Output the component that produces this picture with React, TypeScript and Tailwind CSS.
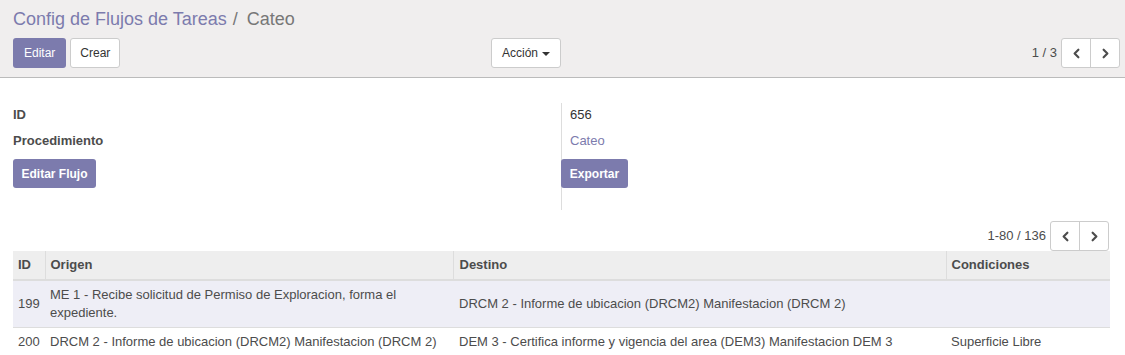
import { ChevronLeft, ChevronRight } from "lucide-react";

const FONT = { fontFamily: '"Liberation Sans", Arial, sans-serif' };

type Row = { id: number; origen: string; destino: string; cond: string };

const ROWS: Row[] = [
  {
    id: 199,
    origen: "ME 1 - Recibe solicitud de Permiso de Exploracion, forma el expediente.",
    destino: "DRCM 2 - Informe de ubicacion (DRCM2) Manifestacion (DRCM 2)",
    cond: "",
  },
  {
    id: 200,
    origen: "DRCM 2 - Informe de ubicacion (DRCM2) Manifestacion (DRCM 2)",
    destino: "DEM 3 - Certifica informe y vigencia del area (DEM3) Manifestacion DEM 3",
    cond: "Superficie Libre",
  },
];

// pager: texto + dos flechas
function Pager({ label }: { label: string }) {
  return (
    <div className="flex items-center gap-[4px]">
      <span className="text-[13px] text-[#4c4c4c]">{label}</span>
      <div className="flex h-[30px] rounded-[3px] border border-[#ccc] bg-white">
        <button className="flex w-[29px] items-center justify-center border-r border-[#ccc] text-[#4c4c4c]">
          <ChevronLeft size={15} strokeWidth={3.5} />
        </button>
        <button className="flex w-[28px] items-center justify-center text-[#4c4c4c]">
          <ChevronRight size={15} strokeWidth={3.5} />
        </button>
      </div>
    </div>
  );
}

export default function App() {
  return (
    <div className="min-h-[355px] w-[1125px] bg-white text-[13px] text-[#4c4c4c]" style={FONT}>
      {/* panel de control */}
      <div className="border-b border-[#bbb] bg-[#f0eeee] px-[13px] pt-[8px] pb-[9px]">
        <div className="flex h-[22px] items-center text-[18px] leading-none">
          <span className="text-[#7c7bad]">Config de Flujos de Tareas</span>
          <span className="ml-[6px] text-[#777]">/</span>
          <span className="ml-[9px] text-[#777]">Cateo</span>
        </div>
        <div className="mt-[8px] flex h-[30px] items-center">
          <div className="flex w-[478px] gap-[4px]">
            <button className="h-[30px] rounded-[3px] bg-[#7c7bad] px-[11px] text-[12px] text-white">Editar</button>
            <button className="h-[30px] rounded-[3px] border border-[#ccc] bg-white px-[9px] text-[12px] text-[#333]">
              Crear
            </button>
          </div>
          <button className="flex h-[30px] items-center gap-[4px] rounded-[3px] border border-[#ccc] bg-white px-[10px] text-[12px] text-[#333]">
            Acción
            <span className="mt-[1px] h-0 w-0 border-x-[4px] border-t-[4px] border-x-transparent border-t-[#333]" />
          </button>
          <div className="ml-auto mr-[-8px]">
            <Pager label="1 / 3" />
          </div>
        </div>
      </div>

      {/* formulario */}
      <div className="grid grid-cols-[548px_1fr] px-[13px] pt-[25px]">
        <div className="flex flex-col pt-[2px]">
          <div className="h-[26px] font-bold leading-[20px]">ID</div>
          <div className="h-[28px] font-bold leading-[20px]">Procedimiento</div>
          <button className="h-[29px] w-[83px] rounded-[3px] bg-[#7c7bad] text-[12px] font-bold text-white">
            Editar Flujo
          </button>
        </div>
        <div className="flex h-[107px] flex-col border-l border-[#ddd] pt-[2px]">
          <div className="h-[26px] pl-[8px] leading-[20px] text-[#333]">656</div>
          <div className="h-[28px] pl-[8px] leading-[20px] text-[#7c7bad]">Cateo</div>
          <button className="-ml-px h-[29px] w-[67px] rounded-[3px] bg-[#7c7bad] text-[12px] font-bold text-white">
            Exportar
          </button>
        </div>
      </div>

      {/* lista */}
      <div className="px-[13px] pt-[11px]">
        <div className="flex justify-end pr-[3px]">
          <Pager label="1-80 / 136" />
        </div>
        <table className="w-[1097px] table-fixed border-collapse text-left">
          <colgroup>
            <col className="w-[32px]" />
            <col className="w-[408px]" />
            <col className="w-[493px]" />
            <col className="w-[164px]" />
          </colgroup>
          <thead>
            <tr className="h-[29px] border-b-2 border-[#ddd] bg-[#eee]">
              <th className="px-[5px] font-bold">ID</th>
              <th className="border-l border-[#ddd] px-[5px] font-bold">Origen</th>
              <th className="border-l border-[#ddd] px-[6px] font-bold">Destino</th>
              <th className="border-l border-[#ddd] px-[5px] font-bold">Condiciones</th>
            </tr>
          </thead>
          <tbody>
            {ROWS.map((r, i) => (
              <tr key={r.id} className={i === 0 ? "border-b border-[#ddd] bg-[#eeeef6]" : "bg-white"}>
                <td className="px-[5px] py-[5px] leading-[18px]">{r.id}</td>
                <td className="px-[5px] py-[5px] leading-[18px]">{r.origen}</td>
                <td className="px-[6px] py-[5px] leading-[18px]">{r.destino}</td>
                <td className="px-[5px] py-[5px] leading-[18px]">{r.cond}</td>
              </tr>
            ))}
          </tbody>
        </table>
      </div>
    </div>
  );
}
